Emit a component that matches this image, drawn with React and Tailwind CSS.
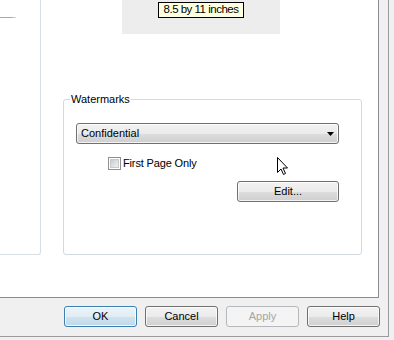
export default function App() {
  const btn =
    "h-[21px] w-[73px] rounded-[3px] border flex items-center justify-center leading-none";
  const grad =
    "bg-[linear-gradient(to_bottom,#f2f2f2_0%,#ebebeb_50%,#dddddd_51%,#cfcfcf_100%)] border-[#707070] shadow-[inset_0_0_0_1px_rgba(255,255,255,0.75)]";
  return (
    <div
      className="relative w-[394px] h-[340px] overflow-hidden bg-[#eef0f2] text-[11px] text-black"
      style={{ fontFamily: '"Liberation Sans", Arial, sans-serif' }}
    >
      <div className="w-[389px] h-[337px] bg-[#f0f0f0] border-r border-b border-[#9a9a9a] flex flex-col">
        {/* tab page */}
        <div className="w-[379px] h-[298px] bg-white border-r border-b border-[#898c95] flex shrink-0">
          {/* left group remnant */}
          <div className="w-[41px] h-[255px] border-r border-b border-[#d5dfe5] rounded-br-[3px] shrink-0 pt-[17px]">
            <div className="w-[16px] h-px bg-[linear-gradient(to_right,#a8a8a8,#a8a8a8_70%,#e0e0e0)]" />
          </div>
          {/* right content */}
          <div className="flex flex-col">
            <div className="ml-[81px] w-[158px] h-[34px] bg-[#ededed] pt-[2px] pl-[36px]">
              <div className="w-[86px] h-[16px] bg-[#ffffe1] border border-black flex items-center justify-center text-[11.5px] leading-none tracking-[-0.5px]">
                8.5 by 11 inches
              </div>
            </div>
            <div className="relative ml-[22px] mt-[65px] w-[299px] h-[156px] border border-[#d0d9de] rounded-[3px]">
              <span className="absolute -top-[8px] left-[6px] bg-white px-[1px] leading-[14px]">
                Watermarks
              </span>
              <div className="flex flex-col pl-[12px] pt-[23px]">
                <div
                  className={`h-[21px] w-[263px] rounded-[3px] border ${grad} flex items-center justify-between pl-[4px] pr-[4px]`}
                >
                  <span className="leading-none">Confidential</span>
                  <svg width="7" height="4" viewBox="0 0 7 4">
                    <path d="M0 0h7L3.5 4z" fill="#000" />
                  </svg>
                </div>
                <div className="flex items-center ml-[32px] mt-[13px] gap-[1px]">
                  <div className="w-[13px] h-[13px] border border-[#8e8f8f] p-px bg-white">
                    <div className="w-full h-full bg-[linear-gradient(135deg,#c6cad0,#f2f2f2)] border border-[#c9c9c9]" />
                  </div>
                  <span className="leading-[13px] ml-[1px] tracking-[-0.15px]">First Page Only</span>
                </div>
                <div
                  className={`ml-[161px] mt-[11px] h-[21px] w-[102px] rounded-[3px] border ${grad} flex items-center justify-center leading-none`}
                >
                  Edit...
                </div>
              </div>
            </div>
          </div>
        </div>
        {/* buttons */}
        <div className="flex gap-[8px] pl-[64px] mt-[8px]">
          <div
            className={`${btn} border-[#3c7fb1] bg-[linear-gradient(to_bottom,#eaf3f9_0%,#e0edf5_50%,#cfe3ef_51%,#c0d9e8_100%)] shadow-[inset_0_0_0_1px_rgba(255,255,255,0.8)]`}
          >
            OK
          </div>
          <div className={`${btn} ${grad}`}>Cancel</div>
          <div className={`${btn} border-[#b5b9bc] bg-[#f4f4f4] text-[#a3a3a3]`}>
            Apply
          </div>
          <div className={`${btn} ${grad}`}>Help</div>
        </div>
      </div>
      {/* mouse cursor */}
      <svg
        className="absolute left-[276px] top-[156px]"
        width="13"
        height="20"
        viewBox="0 0 13 20"
      >
        <path
          d="M1.5 1.5 L1.5 16.5 L5 13 L7.5 18.5 L9.5 17.5 L7 12 L11.5 12 Z"
          fill="#fff"
          stroke="#000"
          strokeWidth="1"
          strokeLinejoin="miter"
        />
      </svg>
    </div>
  );
}
